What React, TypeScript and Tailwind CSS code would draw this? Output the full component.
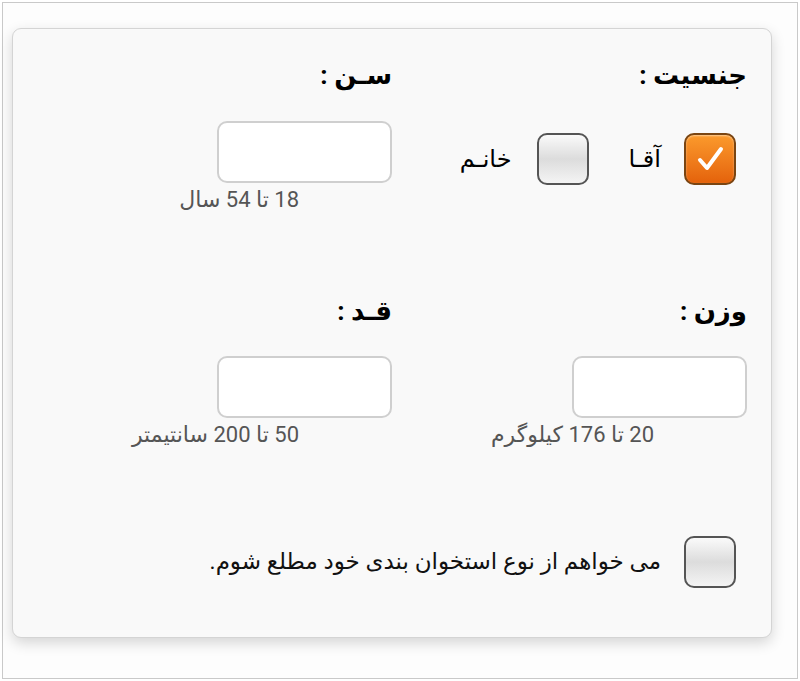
import React from 'react';

const font = { fontFamily: 'Roboto, "DejaVu Sans", sans-serif' };

const Box = ({ checked = false }: { checked?: boolean }) =>
  checked ? (
    <div className="flex h-[52px] w-[52px] shrink-0 items-center justify-center rounded-[10px] border-2 border-[#7a4512] bg-gradient-to-b from-[#fb9a2c] to-[#e4620a] shadow-[inset_0_1px_2px_rgba(255,255,255,0.5)]">
      <svg width="32" height="32" viewBox="0 0 32 32">
        <path d="M6 17 L13 25 L27 6" fill="none" stroke="#fff" strokeWidth="4" strokeLinecap="round" strokeLinejoin="round" />
      </svg>
    </div>
  ) : (
    <div className="h-[52px] w-[52px] shrink-0 rounded-[10px] border-2 border-[#555] bg-gradient-to-b from-[#fafafa] via-[#dcdcdc] to-[#f4f4f4]" />
  );

const Field = ({ caption }: { caption: string }) => (
  <div>
    <div className="h-[62px] w-[175px] rounded-[10px] border-2 border-[#cfcfcf] bg-white" />
    <div className="mt-[5px] pr-[93px] text-[22px] leading-6 whitespace-nowrap text-[#555]">{caption}</div>
  </div>
);

const Heading = ({ children }: { children: React.ReactNode }) => (
  <div className="h-[30px] text-[26px] leading-[30px] font-bold text-black">{children}</div>
);

export default function App() {
  return (
    <div className="h-[681px] w-[800px] bg-white p-[2px]" style={font}>
      <div className="h-full w-full border border-[#c9c9c9] bg-[#fdfdfd] pt-[25px] pl-[9px] pr-[25px]">
        <div
          dir="rtl"
          className="h-[610px] w-[760px] rounded-[9px] border border-[#d4d4d4] bg-[#f9f9f9] px-6 pt-[31px] shadow-[0_5px_14px_rgba(0,0,0,0.16)]"
        >
          <div className="grid grid-cols-2">
            <div>
              <Heading>جنسیت :</Heading>
              <div className="mt-[43px] flex items-center pr-[11px]">
                <Box checked />
                <span className="mr-[23px] text-[24px]">آقـا</span>
                <span className="mr-[40px]">
                  <Box />
                </span>
                <span className="mr-[25px] text-[24px]">خانـم</span>
              </div>
            </div>
            <div>
              <Heading>سـن :</Heading>
              <div className="mt-[31px]">
                <Field caption="18 تا 54 سال" />
              </div>
            </div>
          </div>

          <div className="mt-[84px] grid grid-cols-2">
            <div>
              <Heading>وزن :</Heading>
              <div className="mt-[30px]">
                <Field caption="20 تا 176 کیلوگرم" />
              </div>
            </div>
            <div>
              <Heading>قـد :</Heading>
              <div className="mt-[30px]">
                <Field caption="50 تا 200 سانتیمتر" />
              </div>
            </div>
          </div>

          <div className="mt-[89px] flex items-center pr-[11px]">
            <Box />
            <span className="mr-[23px] text-[23px] text-[#111]">می خواهم از نوع استخوان بندی خود مطلع شوم.</span>
          </div>
        </div>
      </div>
    </div>
  );
}
